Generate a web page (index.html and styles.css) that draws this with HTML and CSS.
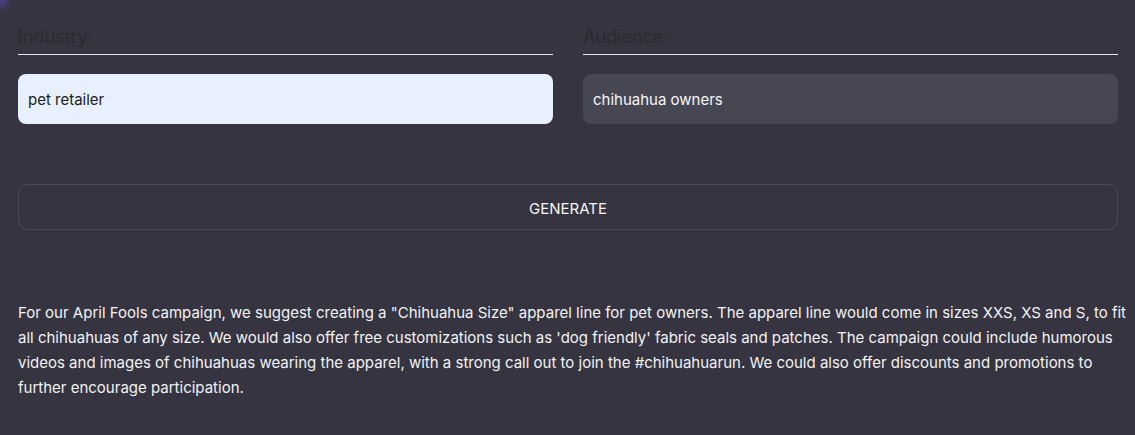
FILE: index.html
```html
<!DOCTYPE html>
<html>
<head>
<meta charset="utf-8">
<link rel="stylesheet" href="styles.css">
</head>
<body>
<div class="glow"></div>
<main class="page">
  <div class="fields">
    <div class="field">
      <div class="label">Industry:</div>
      <div class="input input-autofill">pet retailer</div>
    </div>
    <div class="field">
      <div class="label">Audience:</div>
      <div class="input">chihuahua owners</div>
    </div>
  </div>
  <button class="generate">GENERATE</button>
  <p class="result">For our April Fools campaign, we suggest creating a "Chihuahua Size" apparel line for pet owners. The apparel line would come in sizes XXS, XS and S, to fit all chihuahuas of any size. We would also offer free customizations such as 'dog friendly' fabric seals and patches. The campaign could include humorous videos and images of chihuahuas wearing the apparel, with a strong call out to join the #chihuahuarun. We could also offer discounts and promotions to further encourage participation.</p>
</main>
</body>
</html>
```

FILE: styles.css
```css
html, body {
  margin: 0;
  padding: 0;
  background: #353440;
  height: 100%;
  overflow: hidden;
}
body {
  font-family: Inter, "Noto Sans", sans-serif;
  color: #f2f2f5;
  position: relative;
}
.glow {
  position: absolute;
  left: -10px;
  top: -10px;
  width: 22px;
  height: 22px;
  border-radius: 50%;
  background: radial-gradient(circle, rgba(90, 70, 200, 0.6) 0%, rgba(90, 70, 200, 0) 70%);
}
.page {
  padding: 0 17px 0 18px;
}
.fields {
  display: grid;
  grid-template-columns: 1fr 1fr;
  column-gap: 30px;
}
.field {
  display: flex;
  flex-direction: column;
}
.label {
  font-size: 18px;
  line-height: 22px;
  padding-top: 26px;
  padding-bottom: 6px;
  color: #2b2a33;
  border-bottom: 1px solid #e6e6ea;
}
.input {
  margin-top: 19px;
  height: 50px;
  box-sizing: border-box;
  border-radius: 8px;
  background: #474653;
  padding: 0 10px;
  display: flex;
  align-items: center;
  font-size: 15px;
  color: #f5f5f7;
}
.input-autofill {
  background: #e8f0fe;
  color: #1b1b22;
}
.generate {
  display: block;
  width: 100%;
  margin-top: 60px;
  height: 46px;
  padding: 3px 0 0;
  border: 1px solid #4b4a58;
  border-radius: 10px;
  background: transparent;
  color: #f5f5f7;
  font-family: Inter, "Noto Sans", sans-serif;
  font-size: 15px;
  cursor: pointer;
}
.result {
  margin: 70px -10px 0 0;
  font-size: 15px;
  line-height: 25px;
  color: #f2f2f5;
}
```
